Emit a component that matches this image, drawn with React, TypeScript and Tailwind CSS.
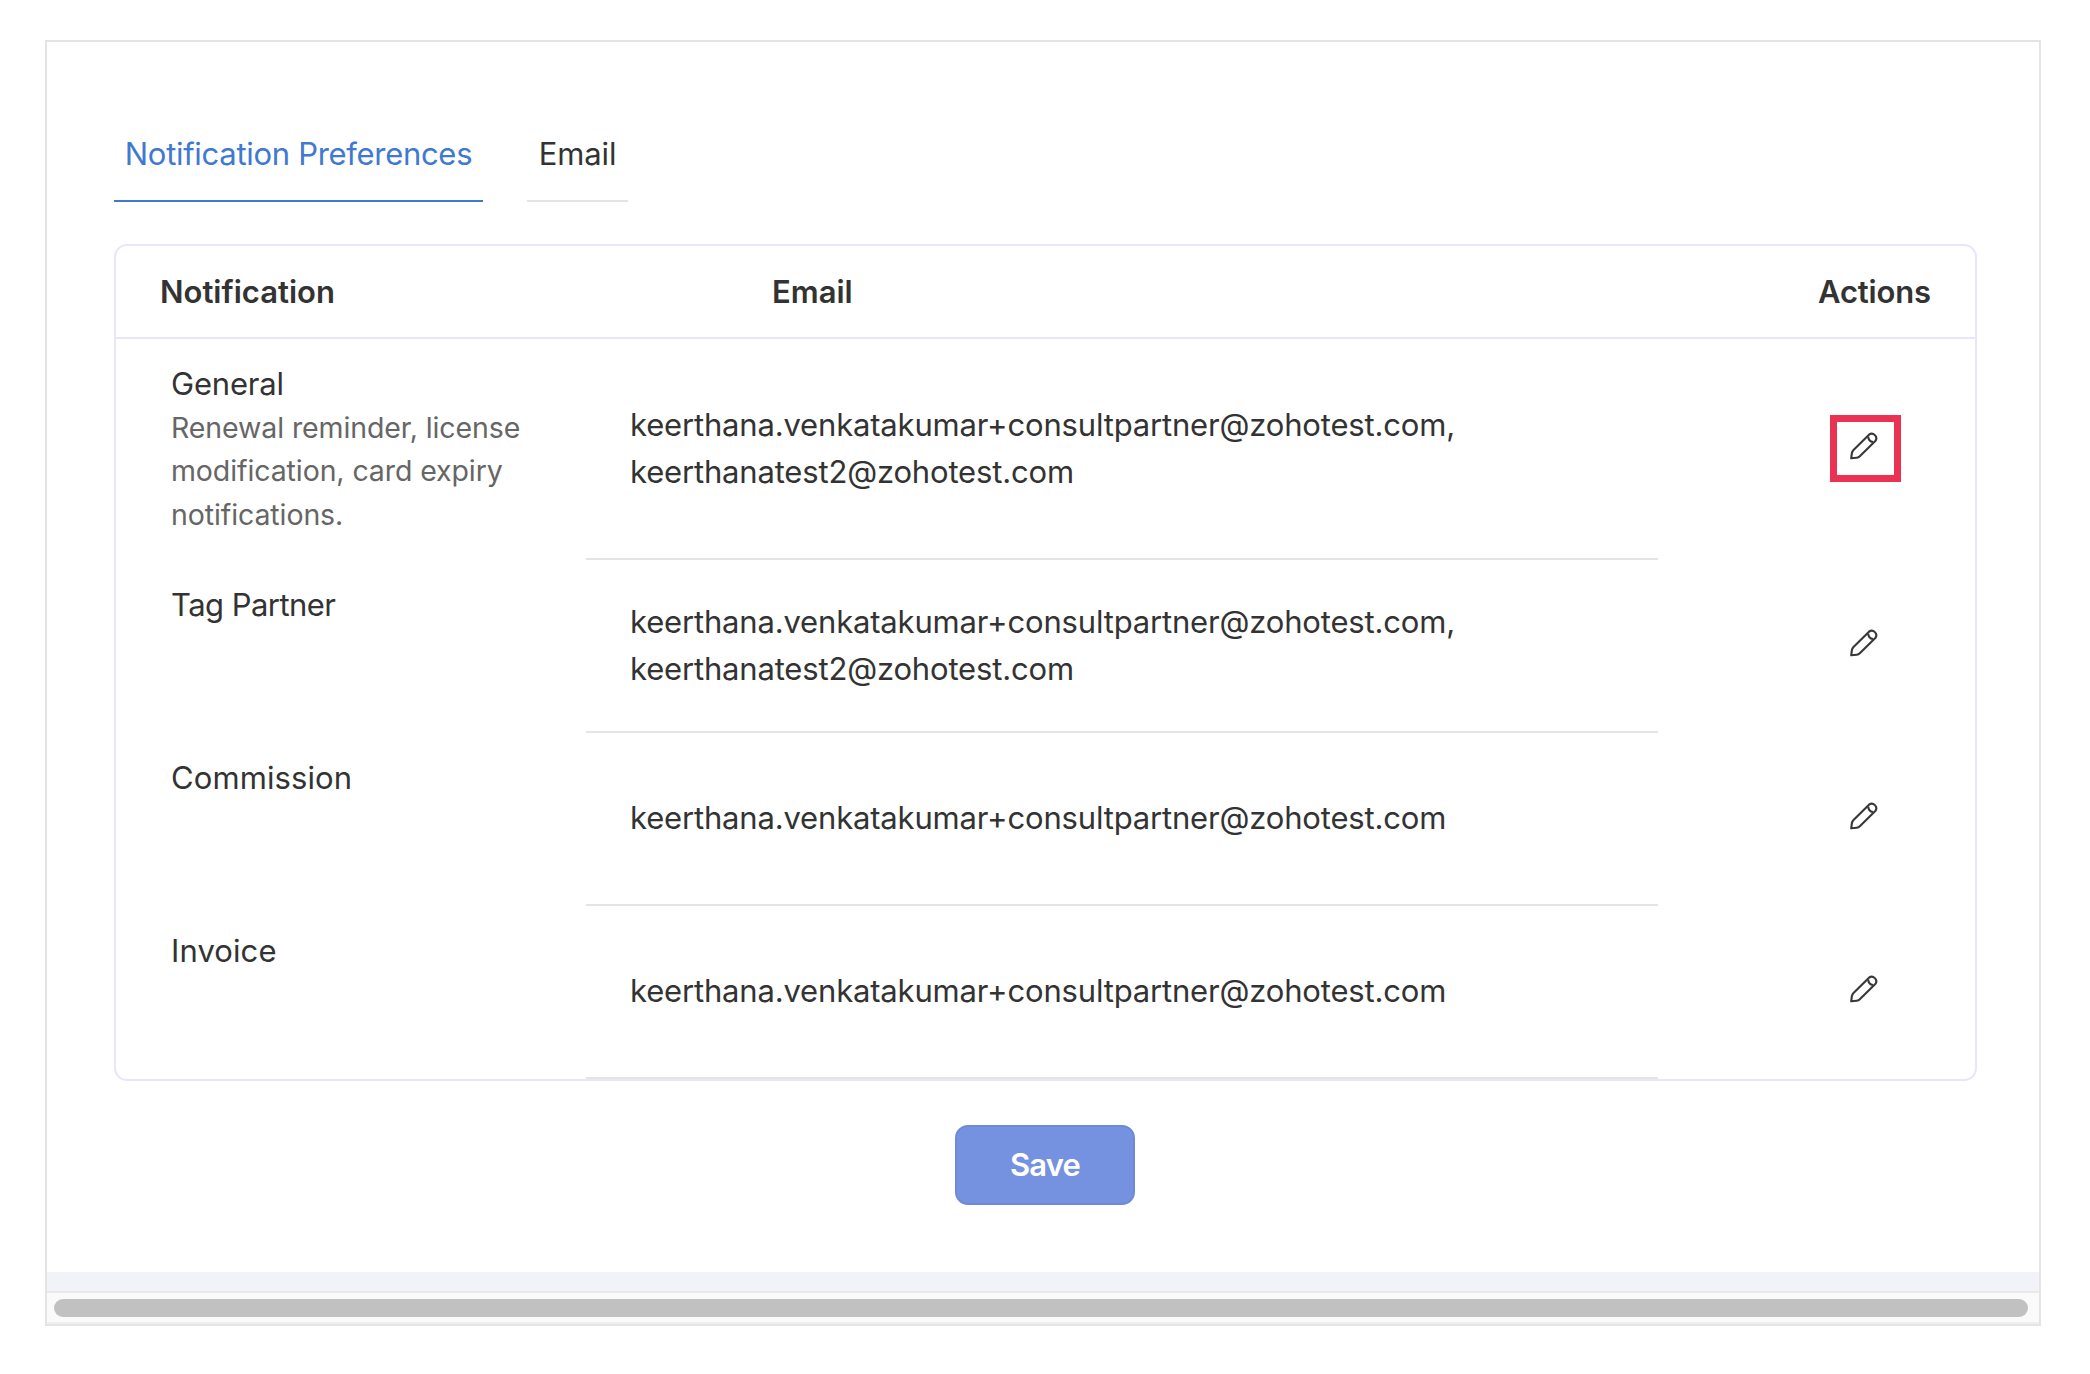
import React from 'react';

const rows = [
  {
    name: 'General',
    tracking: 'tracking-[-0.2px]',
    description: 'Renewal reminder, license modification, card expiry notifications.',
    emails: ['keerthana.venkatakumar+consultpartner@zohotest.com,', 'keerthanatest2@zohotest.com'],
    highlighted: true,
  },
  {
    name: 'Tag Partner',
    tracking: 'tracking-[-0.55px]',
    emails: ['keerthana.venkatakumar+consultpartner@zohotest.com,', 'keerthanatest2@zohotest.com'],
  },
  { name: 'Commission', tracking: 'tracking-[0.1px]', emails: ['keerthana.venkatakumar+consultpartner@zohotest.com'] },
  { name: 'Invoice', tracking: 'tracking-[0.1px]', emails: ['keerthana.venkatakumar+consultpartner@zohotest.com'] },
];

function PencilIcon() {
  return (
    <svg className="w-7 h-7 mr-1" viewBox="0 0 28 28" fill="none" stroke="#383838" strokeWidth="2.1" strokeLinejoin="round">
      <path d="M1.2 26.3 L1.9 21 Q2.2 19.2 3.5 17.9 L19 2.7 A4.5 4.5 0 0 1 25.3 9 L9.8 24.3 Q8.6 25.5 6.8 25.7 Z" />
      <path d="M18.2 4.6 Q18.4 9.2 23 10" />
    </svg>
  );
}

export default function App() {
  return (
    <main className="w-full h-[1374px] bg-white pt-10 pl-[45px] font-['Inter',sans-serif] text-[31px] text-[#333333]">
      <div className="w-[1996px] h-[1286px] border-2 border-[#e4e4e4] flex flex-col">
        <div className="flex-1 pt-[70px] pl-[67px]">
          {/* Tabs */}
          <nav className="flex gap-11 h-[90px]">
            <button className="w-[369px] pb-1 border-b-2 border-[#4079d0] text-[#4079d0] tracking-[-0.3px] whitespace-nowrap">
              Notification Preferences
            </button>
            <button className="w-[101px] pb-1 border-b-2 border-[#e4e4e4] tracking-[-0.1px]">Email</button>
          </nav>

          {/* Notification table */}
          <section className="mt-[42px] w-[1863px] border-2 border-[#e8e5fd] rounded-[13px]">
            <header className="flex h-[93px] border-b-2 border-[#e8e5fd] leading-[92px] font-semibold">
              <div className="w-[612px] pl-11">Notification</div>
              <div className="ml-11">Email</div>
              <div className="ml-auto mr-11 tracking-[-0.15px]">Actions</div>
            </header>
            {rows.map((row) => (
              <div key={row.name} className={`flex ${row.highlighted ? 'h-[221px]' : 'h-[173px]'}`}>
                <div className="w-[470px] pl-[55px] pt-[23px] leading-[43px]">
                  <div className={row.tracking}>{row.name}</div>
                  {row.description && (
                    <p className="w-[362px] pt-px text-[28.5px] leading-[43.3px] text-[#666666] tracking-[-0.1px]">{row.description}</p>
                  )}
                </div>
                <div className="w-[1072px] pl-11 border-b-2 border-[#e4e4e4] flex flex-col justify-center leading-[46.5px] tracking-[-0.17px]">
                  {row.emails.map((email) => (
                    <div key={email}>{email}</div>
                  ))}
                </div>
                <div className="flex-1 flex items-center justify-end pr-[74px] pb-[3px]">
                  <button
                    className={`w-[71px] h-[67px] border-[7px] flex items-center justify-center pb-[5px] ${
                      row.highlighted ? 'border-[#ea3353]' : 'border-transparent'
                    }`}
                  >
                    <PencilIcon />
                  </button>
                </div>
              </div>
            ))}
          </section>

          <button className="block mt-11 ml-[841px] w-[180px] h-20 rounded-[13px] border-2 border-[#6e8ad6] bg-[#7592e1] text-white font-semibold tracking-[-0.8px]">
            Save
          </button>
        </div>

        {/* Horizontal scrollbar */}
        <div className="h-[19px] bg-[#f2f3f9]" />
        <div className="h-[33px] border-y-2 border-t-[#e8e8e8] border-b-[#efefef] bg-[#fafafa] pt-[6px] pl-[7px]">
          <div className="w-[1974px] h-[18px] rounded-full bg-[#c1c1c1]" />
        </div>
      </div>
    </main>
  );
}
